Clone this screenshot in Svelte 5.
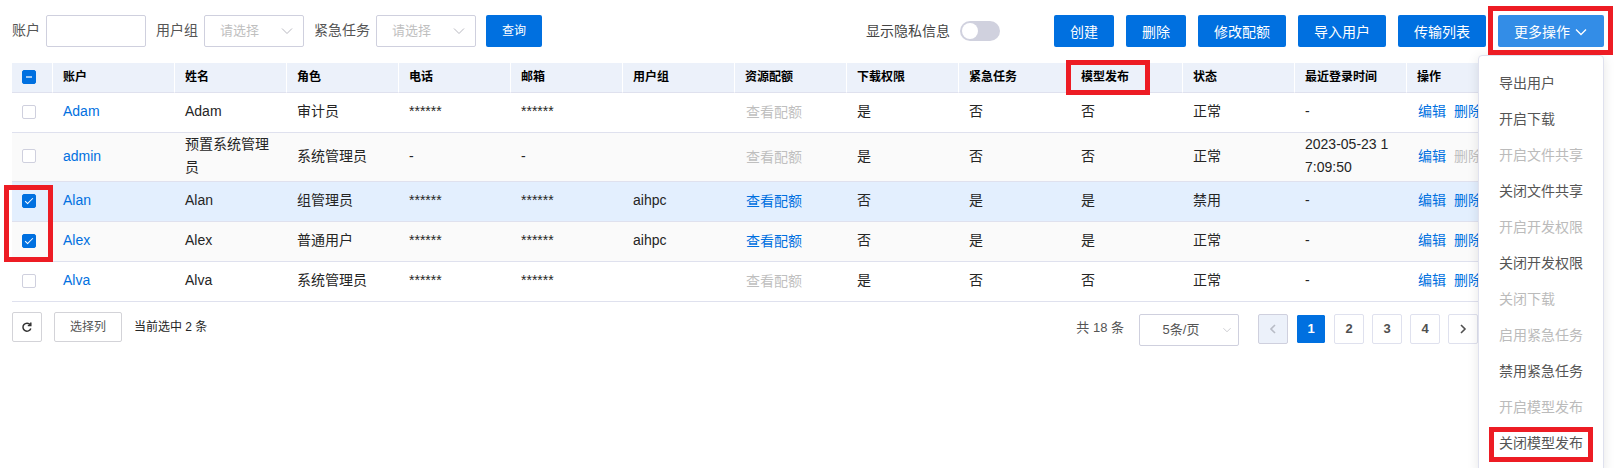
<script>
  const columns = ['账户', '姓名', '角色', '电话', '邮箱', '用户组', '资源配额', '下载权限', '紧急任务', '模型发布', '状态', '最近登录时间', '操作'];

  let users = $state([
    { account: 'Adam', name: 'Adam', role: '审计员', phone: '******', mail: '******', group: '', quota: false, download: '是', urgent: '否', publish: '否', status: '正常', login: '-', removable: true, checked: false },
    { account: 'admin', name: '预置系统管理员', role: '系统管理员', phone: '-', mail: '-', group: '', quota: false, download: '是', urgent: '否', publish: '否', status: '正常', login: '2023-05-23 17:09:50', removable: false, checked: false },
    { account: 'Alan', name: 'Alan', role: '组管理员', phone: '******', mail: '******', group: 'aihpc', quota: true, download: '否', urgent: '是', publish: '是', status: '禁用', login: '-', removable: true, checked: true },
    { account: 'Alex', name: 'Alex', role: '普通用户', phone: '******', mail: '******', group: 'aihpc', quota: true, download: '否', urgent: '是', publish: '是', status: '正常', login: '-', removable: true, checked: true },
    { account: 'Alva', name: 'Alva', role: '系统管理员', phone: '******', mail: '******', group: '', quota: false, download: '是', urgent: '否', publish: '否', status: '正常', login: '-', removable: true, checked: false }
  ]);

  const actions = [
    ['导出用户', true], ['开启下载', true], ['开启文件共享', false], ['关闭文件共享', true],
    ['开启开发权限', false], ['关闭开发权限', true], ['关闭下载', false], ['启用紧急任务', false],
    ['禁用紧急任务', true], ['开启模型发布', false], ['关闭模型发布', true]
  ];

  const current = 'Alan';
  let page = $state(1);
  let selected = $derived(users.filter((u) => u.checked).length);
  let partial = $derived(selected > 0 && selected < users.length);

  function toggleAll(event) {
    const on = event.currentTarget.checked;
    users.forEach((u) => (u.checked = on));
  }
</script>

{#snippet chevron()}
  <svg class="chevron" viewBox="0 0 14 14" aria-hidden="true"><path d="M2 4.5 7 9.5 12 4.5" /></svg>
{/snippet}

<main class="page">
  <div class="toolbar">
    <form class="filters" onsubmit={(e) => e.preventDefault()}>
      <div class="field">
        <label for="account">账户</label>
        <input id="account" class="box" type="text" />
      </div>
      <div class="field">
        <label for="group">用户组</label>
        <span class="select">
          <select id="group" class="box"><option>请选择</option></select>
          {@render chevron()}
        </span>
      </div>
      <div class="field">
        <label for="urgent">紧急任务</label>
        <span class="select">
          <select id="urgent" class="box"><option>请选择</option></select>
          {@render chevron()}
        </span>
      </div>
      <button class="primary small">查询</button>
    </form>

    <div class="commands">
      <label class="privacy">显示隐私信息 <input type="checkbox" role="switch" /></label>
      <button class="primary">创建</button>
      <button class="primary">删除</button>
      <button class="primary">修改配额</button>
      <button class="primary">导入用户</button>
      <button class="primary">传输列表</button>
      <div class="more">
        <button class="primary open" aria-expanded="true">更多操作{@render chevron()}</button>
        <ul class="menu">
          {#each actions as [text, enabled], i}
            <li>
              <button disabled={!enabled}>{text}</button>
              {#if i === actions.length - 1}<span class="mark mark-item"></span>{/if}
            </li>
          {/each}
        </ul>
        <span class="mark mark-more"></span>
      </div>
    </div>
  </div>

  <table>
    <colgroup>
      <col class="c-check" /><col class="c-account" />
      {#each columns.slice(2) as _}<col class="c-data" />{/each}
      <col />
    </colgroup>
    <thead>
      <tr>
        <th><input type="checkbox" aria-label="全选" indeterminate={partial} checked={selected === users.length} onchange={toggleAll} /></th>
        {#each columns as title}
          <th>{title}{#if title === '模型发布'}<span class="mark mark-head"></span>{/if}</th>
        {/each}
      </tr>
    </thead>
    <tbody>
      {#each users as user}
        <tr class:current={user.account === current}>
          <td>
            <input type="checkbox" aria-label={user.account} bind:checked={user.checked} />
            {#if user.account === current}<span class="mark mark-check"></span>{/if}
          </td>
          <td><a href="#user">{user.account}</a></td>
          <td>{user.name}</td>
          <td>{user.role}</td>
          <td>{user.phone}</td>
          <td>{user.mail}</td>
          <td>{user.group}</td>
          <td><button class="link quota" disabled={!user.quota}>查看配额</button></td>
          <td>{user.download}</td>
          <td>{user.urgent}</td>
          <td>{user.publish}</td>
          <td>{user.status}</td>
          <td>{user.login}</td>
          <td>
            <div class="ops">
              <button class="link">编辑</button>
              <button class="link" disabled={!user.removable}>删除</button>
            </div>
          </td>
        </tr>
      {/each}
    </tbody>
  </table>

  <footer>
    <div class="tools">
      <button class="plain icon" aria-label="刷新">
        <svg viewBox="0 0 14 14" aria-hidden="true">
          <path d="M10.2 4.8A4 4 0 1 0 10.8 8.4" /><path d="M10.8 2.4V5.4H7.8" />
        </svg>
      </button>
      <button class="plain">选择列</button>
      <span>当前选中 {selected} 条</span>
    </div>
    <nav class="pager" aria-label="分页">
      <span class="total">共 18 条</span>
      <span class="select size">
        <select class="box" aria-label="每页条数"><option>5条/页</option></select>
        {@render chevron()}
      </span>
      <div class="pages">
        <button class="prev" disabled aria-label="上一页"><svg viewBox="0 0 12 12" aria-hidden="true"><path d="M8 2 4 6 8 10" /></svg></button>
        {#each [1, 2, 3, 4] as n}
          <button class:active={page === n} onclick={() => (page = n)}>{n}</button>
        {/each}
        <button aria-label="下一页"><svg viewBox="0 0 12 12" aria-hidden="true"><path d="M4 2 8 6 4 10" /></svg></button>
      </div>
    </nav>
  </footer>
</main>

<style>
  :global(body) { background: #fff; }
  .page {
    --primary: #0070e0;
    --line: #dfe1ee;
    --input: #cfd0de;
    --muted: #bfbfbf;
    box-sizing: border-box;
    height: 100vh;
    overflow: hidden;
    padding: 15px 11px 0 12px;
    color: #252525;
    font: 14px/23px "Liberation Sans", "Noto Sans CJK SC", sans-serif;
  }
  .page *, .page *::before { box-sizing: border-box; }
  button, input, select { font: inherit; margin: 0; }
  button { cursor: pointer; }
  svg { display: block; fill: none; stroke: currentColor; }

  .toolbar { display: flex; justify-content: space-between; margin-bottom: 16px; }
  .filters { display: flex; gap: 10px; }
  .field { display: flex; align-items: center; gap: 6px; color: #555; }
  .field label { padding-bottom: 2px; }
  .box {
    width: 100px;
    height: 32px;
    border: 1px solid var(--input);
    border-radius: 2px;
    background: #fff;
    outline: 0;
  }
  .select { display: grid; align-items: center; }
  .select > * { grid-area: 1 / 1; }
  .select select { appearance: none; padding: 0 15px 2px; font-size: 13px; color: var(--muted); }
  .chevron { width: 14px; height: 14px; }
  .select .chevron { justify-self: end; margin-right: 10px; color: #b8b8c0; pointer-events: none; }

  .commands { display: flex; align-items: center; gap: 12px; }
  .privacy { display: flex; align-items: center; gap: 10px; margin-right: 42px; color: #444; }
  .privacy input {
    appearance: none;
    width: 40px;
    height: 20px;
    border-radius: 10px;
    background: #d0d1de;
    display: flex;
  }
  .privacy input::before { content: ""; width: 16px; height: 16px; margin: 2px; border-radius: 50%; background: #fff; }
  .primary {
    height: 32px;
    padding: 0 16px;
    border: 0;
    border-radius: 2px;
    background: var(--primary);
    color: #fff;
    white-space: nowrap;
  }
  .commands .primary { padding-top: 2px; }
  .small { font-size: 12px; }
  .open { display: flex; align-items: center; gap: 4px; background: #338de7; }
  .open .chevron { stroke-width: 1.3; }
  .more { position: relative; z-index: 1; }
  .menu {
    position: absolute;
    top: 40px;
    right: 0;
    margin: 0;
    padding: 9px 0 11px;
    width: 126px;
    list-style: none;
    background: #fff;
    border: 1px solid var(--line);
    border-radius: 4px;
    box-shadow: 0 2px 12px rgba(0, 0, 0, 0.1);
  }
  .menu li { position: relative; }
  .menu button {
    width: 100%;
    height: 36px;
    padding: 0 20px;
    border: 0;
    background: none;
    color: #555;
    text-align: left;
    white-space: nowrap;
  }
  .menu button:disabled { color: #bbb; }

  .mark { position: absolute; border: 5px solid #ed1c24; pointer-events: none; z-index: 2; }
  .mark-more { inset: -9px -9px -8px -10px; }
  .mark-item { inset: 2px 10px -1px 10px; }
  .mark-head { inset: -3px 32px -3px -5px; }
  .mark-check { left: -8px; top: 3px; width: 49px; height: 77px; }

  table { width: 100%; table-layout: fixed; border-spacing: 0; }
  .c-check { width: 41px; }
  .c-account { width: 122px; }
  .c-data { width: 112px; }
  th, td {
    position: relative;
    padding: 0 12px 2px 10px;
    border-bottom: 1px solid var(--line);
    text-align: left;
    word-break: break-all;
  }
  th {
    height: 30px;
    padding-bottom: 0;
    border-right: 1px solid #fff;
    background: #ecf1fa;
    color: #000;
    font-size: 12px;
    font-weight: 700;
  }
  th:first-child, td:first-child { padding-right: 0; }
  th:first-child { padding-bottom: 1px; }
  td { height: 40px; }
  tbody tr:nth-child(even) { background: #fafafa; }
  tbody tr.current { background: #e3effe; }
  table input {
    display: block;
    appearance: none;
    width: 14px;
    height: 14px;
    border: 1px solid var(--input);
    border-radius: 2px;
    background: #fff;
  }
  table input:checked, table input:indeterminate { border-color: var(--primary); background: var(--primary); }
  table input:checked::before {
    content: "";
    display: block;
    width: 8px;
    height: 4px;
    margin: 3px 2px;
    border: solid #fff;
    border-width: 0 0 1px 1px;
    transform: rotate(-45deg);
  }
  table input:indeterminate::before { content: ""; display: block; width: 6px; height: 2px; margin: 5px 3px; background: #9fc8f3; }
  a, .link { color: var(--primary); text-decoration: none; }
  .link { padding: 0; border: 0; background: none; white-space: nowrap; }
  .link:disabled { color: var(--muted); }
  .quota { display: block; padding: 2px 1px 0; }
  .ops { display: flex; gap: 8px; padding-left: 1px; }

  footer { display: flex; justify-content: space-between; align-items: flex-start; padding-top: 10px; }
  .tools { display: flex; align-items: center; font-size: 12px; gap: 12px; }
  .plain {
    height: 30px;
    padding: 0 15px;
    border: 1px solid #d3d3d8;
    border-radius: 2px;
    background: #fff;
    color: #555;
  }
  .icon { width: 30px; padding: 0 7px; color: #333; }
  .icon svg { width: 14px; height: 14px; stroke-width: 1.5; }
  .pager { display: flex; align-items: flex-start; padding: 2px 126px 0 0; font-size: 13px; color: #555; }
  .total { line-height: 28px; margin-right: 15px; }
  .size { margin-right: 19px; }
  .size select { padding: 0 26px 2px 10px; text-align: center; text-align-last: center; color: #555; }
  .size .chevron { width: 10px; height: 10px; margin-right: 7px; }
  .pages { display: flex; gap: 8px; }
  .pages button {
    display: grid;
    place-items: center;
    width: 30px;
    height: 30px;
    padding: 0 0 1px;
    border: 1px solid var(--line);
    border-radius: 2px;
    background: #fff;
    color: #505050;
    font-weight: 700;
  }
  .pages .active { border-color: #fff; background: var(--primary); background-clip: padding-box; color: #fff; }
  .pages .prev { border-color: var(--input); background: #ecf1fa; color: #b8bcc6; }
  .pages svg { width: 12px; height: 12px; stroke-width: 1.6; }
</style>
